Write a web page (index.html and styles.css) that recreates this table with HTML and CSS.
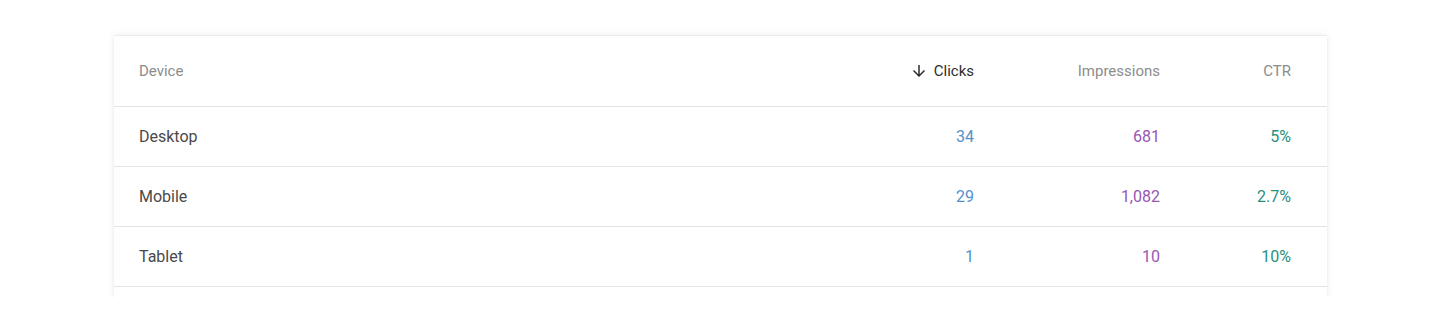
FILE: index.html
```html
<!DOCTYPE html>
<html lang="en">
<head>
<meta charset="utf-8">
<title>Devices</title>
<link rel="stylesheet" href="styles.css">
</head>
<body>
<div class="page">
  <div class="card">
    <div class="row head">
      <div class="cell name">Device</div>
      <div class="cell num active">
        <svg class="arrow" viewBox="0 0 24 24" width="18" height="18"><path d="M20 12l-1.41-1.41L13 16.17V4h-2v12.17l-5.58-5.59L4 12l8 8 8-8z"/></svg>
        <span>Clicks</span>
      </div>
      <div class="cell num">Impressions</div>
      <div class="cell num">CTR</div>
    </div>
    <div class="row">
      <div class="cell name">Desktop</div>
      <div class="cell num clicks">34</div>
      <div class="cell num impr">681</div>
      <div class="cell num ctr">5%</div>
    </div>
    <div class="row">
      <div class="cell name">Mobile</div>
      <div class="cell num clicks">29</div>
      <div class="cell num impr">1,082</div>
      <div class="cell num ctr">2.7%</div>
    </div>
    <div class="row">
      <div class="cell name">Tablet</div>
      <div class="cell num clicks">1</div>
      <div class="cell num impr">10</div>
      <div class="cell num ctr">10%</div>
    </div>
  </div>
</div>
</body>
</html>
```

FILE: styles.css
```css
html, body {
  margin: 0;
  padding: 0;
  background: #ffffff;
}

body {
  font-family: Roboto, "Liberation Sans", Arial, sans-serif;
  color: #4a4a4a;
}

.page {
  padding: 35px 0 0 114px;
}

.card {
  width: 1213px;
  background: #ffffff;
  box-shadow: 0 0 8px rgba(0, 0, 0, 0.07), 0 2px 3px rgba(0, 0, 0, 0.06);
  padding-bottom: 10px;
  border-top: 1px solid #ececec;
}

.row {
  display: grid;
  grid-template-columns: 1fr 200px 186px 131px;
  align-items: center;
  height: 59px;
  padding: 0 36px 0 25px;
  border-bottom: 1px solid #e3e3e3;
  font-size: 16px;
}

.row.head {
  height: 70px;
  font-size: 15px;
  color: #8c8c8c;
}

.cell.num {
  text-align: right;
  display: flex;
  justify-content: flex-end;
  align-items: center;
}

.cell.active {
  color: #2e2e2e;
  gap: 6px;
}

.arrow {
  fill: #2e2e2e;
  display: block;
}

.clicks { color: #5590cb; }
.impr { color: #9558b3; }
.ctr { color: #27907f; }
```
